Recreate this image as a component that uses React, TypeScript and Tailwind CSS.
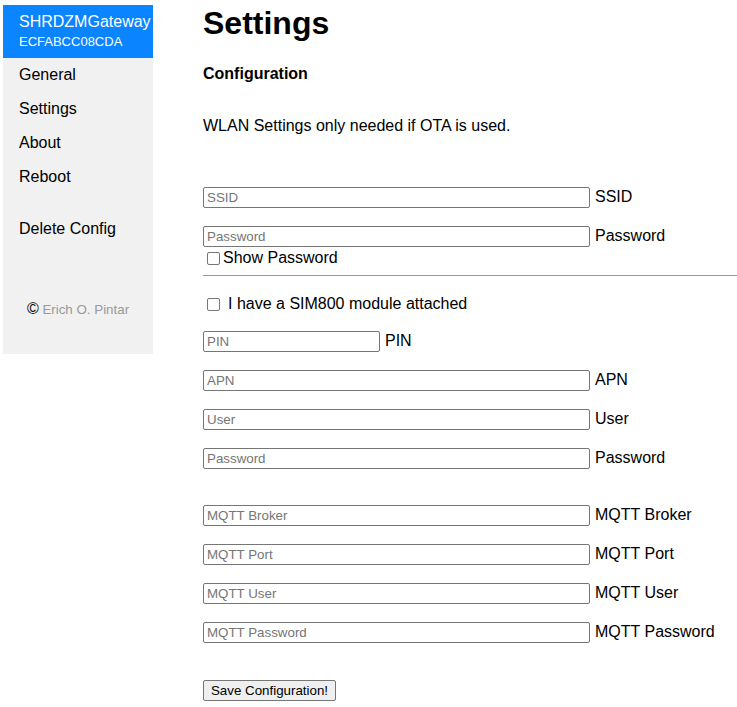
import React from 'react';

const navItems = ['General', 'Settings', 'About', 'Reboot'];

const Field = ({ placeholder, label, narrow }: { placeholder: string; label: string; narrow?: boolean }) => (
  <div className="flex items-baseline">
    <input
      type="text"
      placeholder={placeholder}
      className={`${narrow ? 'w-[177px]' : 'w-[387px]'} h-[21px] border border-[#767676] rounded-[2px] px-[3px] text-[13.33px] leading-[15px] text-black placeholder:text-[#757575] bg-white outline-none`}
    />
    <span className="ml-[5px] text-[16px] leading-[18px]">{label}</span>
  </div>
);

const Checkbox = () => (
  <span className="inline-block w-[13px] h-[13px] border border-[#767676] rounded-[2px] bg-white" />
);

const App = () => {
  return (
    <div className="flex pl-[3px] pt-[5px] min-h-[707px] bg-white text-black font-['Liberation_Sans',Arial,sans-serif]">
      {/* Sidebar */}
      <div className="w-[150px] h-[349px] bg-[#f1f1f1] shrink-0">
        <div className="bg-[#0a84ff] text-white pl-[16px] pt-[8px] h-[53px]">
          <div className="text-[16px] leading-[18px] whitespace-nowrap">SHRDZMGateway</div>
          <div className="text-[13px] leading-[15px] mt-[3px]">ECFABCC08CDA</div>
        </div>
        {navItems.map((item) => (
          <div key={item} className="pl-[16px] py-[8px] text-[16px] leading-[18px]">
            {item}
          </div>
        ))}
        <div className="pl-[16px] py-[8px] mt-[18px] text-[16px] leading-[18px]">Delete Config</div>
        <div className="mt-[55px] text-center text-[13.33px] leading-[16px] text-[#999999]">
          <span className="text-black text-[16px]">©</span> Erich O. Pintar
        </div>
      </div>

      {/* Main */}
      <div className="ml-[50px] flex-1 flex flex-col">
        <h1 className="text-[32px] leading-[37px] font-bold">Settings</h1>
        <h3 className="mt-[23px] text-[16px] leading-[18px] font-bold">Configuration</h3>
        <p className="mt-[34px] text-[16px] leading-[18px]">WLAN Settings only needed if OTA is used.</p>

        <div className="mt-[52px] flex flex-col gap-[18px]">
          <Field placeholder="SSID" label="SSID" />
          <Field placeholder="Password" label="Password" />
        </div>
        <label className="mt-[2px] flex items-center h-[18px] text-[16px] leading-[18px]">
          <span className="ml-[4px] mr-[3px] flex"><Checkbox /></span>
          Show Password
        </label>

        <hr className="mt-[8px] border-0 border-t border-[#9a9a9a]" />

        <label className="mt-[19px] flex items-center h-[18px] text-[16px] leading-[18px]">
          <span className="ml-[4px] mr-[8px] flex"><Checkbox /></span>
          I have a SIM800 module attached
        </label>

        <div className="mt-[18px] flex flex-col gap-[18px]">
          <Field placeholder="PIN" label="PIN" narrow />
          <Field placeholder="APN" label="APN" />
          <Field placeholder="User" label="User" />
          <Field placeholder="Password" label="Password" />
        </div>

        <div className="mt-[36px] flex flex-col gap-[18px]">
          <Field placeholder="MQTT Broker" label="MQTT Broker" />
          <Field placeholder="MQTT Port" label="MQTT Port" />
          <Field placeholder="MQTT User" label="MQTT User" />
          <Field placeholder="MQTT Password" label="MQTT Password" />
        </div>

        <div className="mt-[35px]">
          <button className="h-[21px] w-[133px] border border-[#767676] rounded-[2px] bg-[#efefef] text-[13.33px] leading-[15px] text-black">
            Save Configuration!
          </button>
        </div>
      </div>
    </div>
  );
};

export default App;
